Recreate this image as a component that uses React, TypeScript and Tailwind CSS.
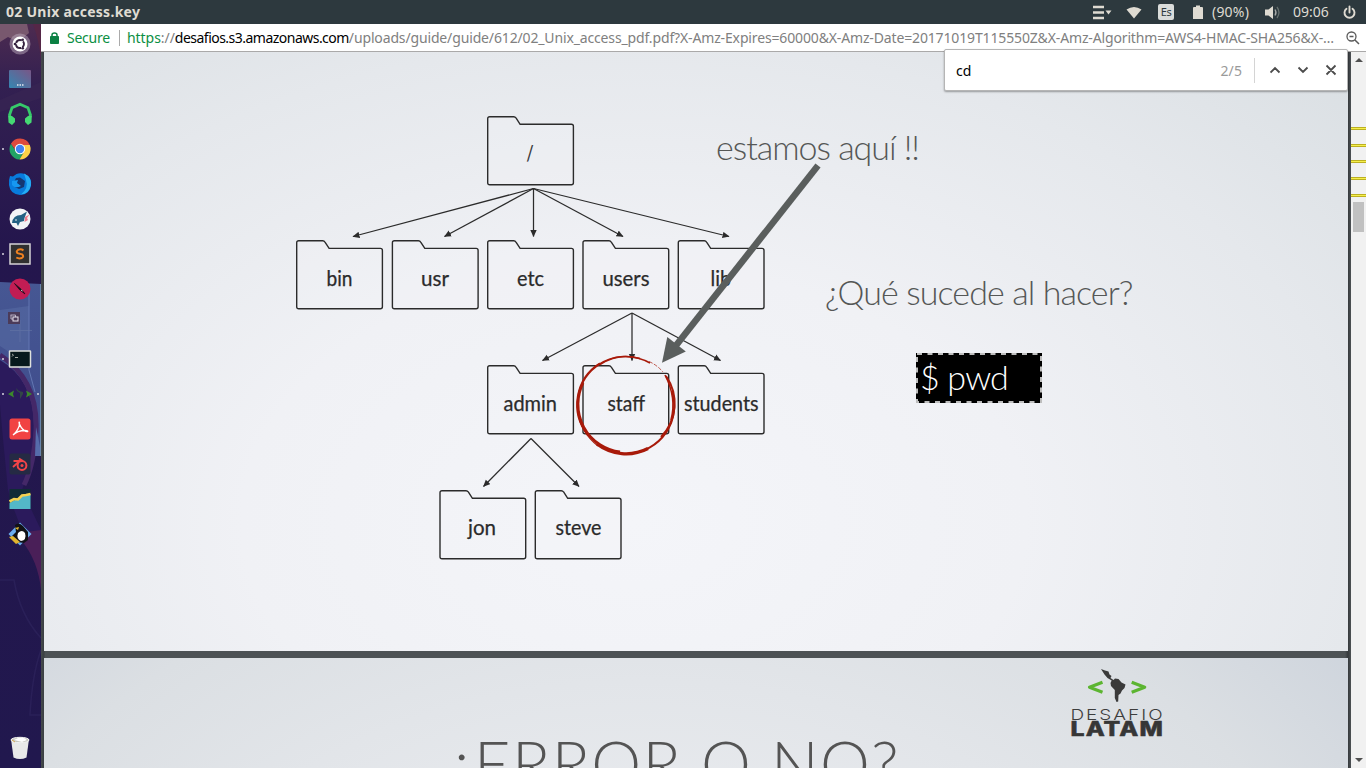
import React from "react";

const ui = "font-['Noto_Sans','Open_Sans',sans-serif]";
const slideFont = "font-['Lato','Open_Sans',sans-serif]";

type Node = { label: string; x: number; y: number; tx: number; w: number; base: number };

const nodes: Node[] = [
  { label: "/", x: 487.7, y: 116.7, tx: 526.5, w: 7, base: 160.5 },
  { label: "bin", x: 296.7, y: 240.8, tx: 326.5, w: 26, base: 285.5 },
  { label: "usr", x: 392.4, y: 240.8, tx: 421, w: 28, base: 285.5 },
  { label: "etc", x: 487.7, y: 240.8, tx: 517, w: 27, base: 285.5 },
  { label: "users", x: 583, y: 240.8, tx: 602.5, w: 47, base: 285.5 },
  { label: "lib", x: 678.3, y: 240.8, tx: 710.5, w: 20.5, base: 285.5 },
  { label: "admin", x: 487.7, y: 365.8, tx: 503.5, w: 53.5, base: 410.5 },
  { label: "staff", x: 583, y: 365.8, tx: 607.5, w: 37.5, base: 410.5 },
  { label: "students", x: 678.3, y: 365.8, tx: 684, w: 74.5, base: 410.5 },
  { label: "jon", x: 440, y: 490.7, tx: 468, w: 28, base: 534.5 },
  { label: "steve", x: 535.3, y: 490.7, tx: 555.5, w: 46, base: 534.5 },
];

const edges: number[][] = [
  [533.5, 188.5, 353, 236.5],
  [533.5, 188.5, 444.5, 236.5],
  [533.5, 188.5, 533.5, 236.5],
  [533.5, 188.5, 623, 236.5],
  [533.5, 188.5, 729, 236.5],
  [632, 313, 542.5, 360.5],
  [632, 313, 632, 360.5],
  [632, 313, 720.5, 360.5],
  [531, 438.5, 483.5, 486.5],
  [531, 438.5, 579, 486.5],
];

function Diagram() {
  return (
    <svg className="absolute inset-0 h-full w-full font-['Lato',sans-serif]" viewBox="44 52 1304 599">
      <defs>
        <marker id="tip" markerUnits="userSpaceOnUse" markerWidth="8" markerHeight="8" refX="6.5" refY="3.5" orient="auto">
          <path d="M0 0.3 L7 3.5 L0 6.7Z" fill="#2b2b2b" />
        </marker>
      </defs>
      {edges.map((e, i) => (
        <line key={i} x1={e[0]} y1={e[1]} x2={e[2]} y2={e[3]} stroke="#2b2b2b" strokeWidth="1.25" markerEnd="url(#tip)" />
      ))}
      {nodes.map((n) => (
        <g key={n.label}>
          <path
            transform={`translate(${n.x} ${n.y})`}
            d="M2 0H26Q27.500 0 28.300 1.300L32.400 7.600H83.700Q85.700 7.600 85.700 9.600V66Q85.700 68 83.700 68H2Q0 68 0 66V2Q0 0 2 0Z"
            fill="#f4f5f9"
            fillOpacity="0.25"
            stroke="#2b2b2b"
            strokeWidth="1.4"
          />
          <text x={n.tx} y={n.base} textLength={n.w} lengthAdjust="spacingAndGlyphs" fontSize="20.500" fontWeight="400" fill="#2b2b2b" stroke="#2b2b2b" strokeWidth="0.25">
            {n.label}
          </text>
        </g>
      ))}
      <path d="M818 165.500 L674 348" stroke="#5a5e5d" strokeWidth="6.6" fill="none" />
      <path d="M662 362.800L667.300 337L685.800 351.500Z" fill="#5a5e5d" />
      <g fill="none" stroke="#a81a0a">
        <path d="M597 365.500A49 49 0 0 1 650 363" strokeWidth="1.500" />
        <path d="M600 364.500A48.500 48.500 0 0 1 640 358.500" strokeWidth="1.500" />
        <path d="M649 361.500Q657 365 663 372" strokeWidth="1" strokeDasharray="4 1.500" opacity="0.7" />
        <path d="M600 363.500A48.500 48.500 0 0 0 588 435" strokeWidth="2.200" />
        <path d="M583 383A48 48 0 0 0 620 452" strokeWidth="2.800" />
        <path d="M597 444A48 48 0 0 0 648 448.500" strokeWidth="3.200" />
        <path d="M630 453.500A48 48 0 0 0 672 391" strokeWidth="2" />
        <path d="M661 437A48 48 0 0 0 666 376" strokeWidth="2" />
        <path d="M671 420Q677 398 665 375" strokeWidth="1.600" />
        <path d="M577.500 410Q580 432 598 446" strokeWidth="1.200" />
      </g>
    </svg>
  );
}

function Logo() {
  return (
    <svg className="absolute left-[1024px] top-[8px] h-[76px] w-[100px] font-['Inter',sans-serif]" viewBox="1068 666 100 76">
      <g fill="none" stroke="#5cb531" strokeWidth="3.200">
        <path d="M1102.500 682.300L1089.500 687.300L1102.500 692.200" strokeLinejoin="round" />
        <path d="M1131.700 682.300L1144.700 687.300L1131.700 692.200" strokeLinejoin="round" />
      </g>
      <path
        d="M1101 669L1105 670.500L1108.500 671.500L1109.500 674.500L1111.500 676L1110.500 678L1113.500 680L1115 678.500L1118.500 679L1121.500 682.500L1125.500 684.500L1124.500 688L1122 690.500L1120.500 693.500L1118.500 695L1118.200 701.500L1116.500 702L1114.800 698V690L1111 686L1110.500 683L1111.700 680.500L1107.500 678L1104.500 674.500Z"
        fill="#3a3a3a"
      />
      <text x="1070.500" y="719.500" fontSize="14.500" fontWeight="300" letterSpacing="1.500" textLength="94" lengthAdjust="spacingAndGlyphs" fill="#3d3d3d">DESAFIO</text>
      <text x="1070.500" y="736" fontSize="19.500" fontWeight="800" letterSpacing="0.900" textLength="93.500" lengthAdjust="spacingAndGlyphs" fill="#363636" stroke="#363636" strokeWidth="0.5" strokeLinejoin="round">LATAM</text>
    </svg>
  );
}

function Wallpaper() {
  return (
    <svg className="absolute inset-0 h-full w-full" viewBox="0 24 41 744" preserveAspectRatio="none">
      <defs>
        <linearGradient id="sky" x1="0" y1="0" x2="0" y2="1">
          <stop offset="0" stopColor="#4d2b50" />
          <stop offset="0.08" stopColor="#332051" />
          <stop offset="0.3" stopColor="#24164d" />
          <stop offset="1" stopColor="#21184e" />
        </linearGradient>
        <linearGradient id="pane" x1="0" y1="0" x2="0" y2="1">
          <stop offset="0" stopColor="#465793" />
          <stop offset="1" stopColor="#3e4a8b" />
        </linearGradient>
      </defs>
      <rect y="24" width="41" height="744" fill="url(#sky)" />
      <path d="M0 24H27L29 33L18 42L8 37L0 42Z" fill="#78586e" />
      <path d="M33 24H41V60Q39 40 33 24" fill="#552747" />
      <path d="M0 100L41 82V98L0 112Z" fill="#382654" opacity=".6" />
      <path d="M0 282L41 284V455H35L0 380Z" fill="url(#pane)" />
      <path d="M0 310L29 306V365L0 346Z" fill="#5568a2" opacity=".65" />
      <path d="M29 284V370L35 392" fill="none" stroke="#6377b2" />
      <path d="M0 360Q35 380 34 429Q34 460 22 490L41 530V560Q20 535 8 490Q2 430 0 405Z" fill="#2b1a5c" />
      <path d="M0 355Q38 380 36 430Q34 465 24 485" fill="none" stroke="#442868" strokeWidth="5" />
      <path d="M36 427Q41 450 41 456H35Z" fill="#566cab" />
      <path d="M26 532L41 530V590Q38 560 21 540" fill="#4a1f58" />
      <path d="M0 580H14Q20 615 41 638M41 650Q32 675 30 715H41" fill="none" stroke="#2a2058" strokeWidth="1.500" />
      <path d="M40.500 284V456" stroke="#6886ad" />
    </svg>
  );
}

const icons: React.ReactNode[] = [
  <>
    <circle cx="16" cy="16" r="10.5" fill="#b9a9bb" opacity=".5" />
    <circle cx="16" cy="16" r="7.500" fill="#fff" />
    <circle cx="16" cy="16" r="4" fill="none" stroke="#35233f" strokeWidth="1.900" strokeDasharray="7 1.370" strokeDashoffset="-4.900" />
    <circle cx="11" cy="16" r="1.300" fill="#35233f" />
    <circle cx="18.700" cy="11.700" r="1.300" fill="#35233f" />
    <circle cx="18.700" cy="20.300" r="1.300" fill="#35233f" />
  </>,
  <>
    <rect x="5" y="7" width="22" height="18" rx="1" fill="url(#desk)" />
    <path d="M13 22h1.500M15.500 22H17M18 22h1.500" stroke="#e5e7ef" strokeWidth="1.500" />
  </>,
  <>
    <path d="M6.500 20L5.500 17L8 9.800L16 6.200L24 9.800L26.500 17L25.500 20" fill="none" stroke="#36ca6a" strokeWidth="2.800" />
    <path d="M4.200 18L8 18L11 20.500V24L8 27L4.500 24.500ZM27.800 18L24 18L21 20.500V24L24 27L27.500 24.500Z" fill="#45d973" />
  </>,
  <>
    <path d="M16 5.500A10.500 10.500 0 0 1 25.800 12H16L12 18L6.910 10.750A10.500 10.500 0 0 1 16 5.500Z" fill="#dd4b3e" />
    <path d="M6.910 10.750A10.500 10.500 0 0 0 15.500 26.500L20 18.500L12 18.500Z" fill="#21a366" />
    <path d="M25.800 12A10.500 10.500 0 0 1 15.500 26.500L20.200 18.500L19.500 12Z" fill="#fed148" />
    <circle cx="16" cy="16" r="5.200" fill="#fff" />
    <circle cx="16" cy="16" r="4.200" fill="#4384f3" />
  </>,
  <>
    <path d="M6 8L9 8.500Q14 3.500 21 6Q28 10 27 17Q26 26.500 16 27Q6 26 5 17Q4.500 12 6 8Z" fill="#087bdc" />
    <path d="M20 5.500Q28 9 27 17Q25 26 17 26.500Q25 20 22 12Z" fill="#26adf5" />
    <path d="M12 10L16 9.500L21 13L20 19L15 21L11 19L15 17L10 14Z" fill="#153772" />
    <path d="M8 13L14 12L13 15L17 18Q11 21 8 17Z" fill="#1698f1" />
  </>,
  <>
    <circle cx="16" cy="16" r="10.500" fill="#f2f4f6" />
    <path d="M8 20Q9 12 17 12L23 8.500L20.500 15L20 18L16 19L14 23L12.500 20Z" fill="#246284" />
    <path d="M21 14L25.500 11.500L23 15L24 17L20.500 19L21 16Z" fill="#ed7b8b" />
    <circle cx="12" cy="17" r=".8" fill="#fff" />
  </>,
  <>
    <rect x="6" y="6" width="20" height="20" fill="#303030" stroke="#d5d2d5" strokeWidth="1.500" />
    <path d="M19.500 12.300Q17 10.800 14.200 11.700Q11.700 13.500 13.500 15.200L18 16.300Q20.400 18.500 17.800 20Q15 21 12.300 19.500" fill="none" stroke="#ef8221" strokeWidth="2" />
  </>,
  <>
    <circle cx="16" cy="16" r="10.500" fill="#c21d54" />
    <path d="M10.500 10.500L17.500 16.500L21 21L15.800 17Z" fill="#160d18" stroke="#160d18" strokeWidth=".7" />
    <path d="M17 17L18.500 18" stroke="#ddd" />
  </>,
  <>
    <path d="M16 12V34M6 22.500H28" stroke="#6475a5" opacity=".6" />
    <rect x="4" y="4" width="12" height="12" fill="#4b3b59" />
    <path d="M6.500 7h5v2M7 7v4h2" fill="none" stroke="#b7afc3" />
    <rect x="9" y="9" width="5" height="4" fill="#4b3b59" stroke="#e9e4ef" />
  </>,
  <>
    <rect x="5.500" y="8" width="21" height="16" rx=".5" fill="#07191d" stroke="#e0e2dd" strokeWidth="1.500" />
    <path d="M8 11L9.500 12L8 13.500M11 14.500H14" fill="none" stroke="#a5aba5" />
  </>,
  <>
    <path d="M4 16L10 12.500L9 16L10 19.500ZM28 16L22 12.500L23 16L22 19.500Z" fill="#3c882b" />
    <path d="M12 10L15 13L19 14L19 16L16 21L16 15L13 13Z" fill="#324646" />
  </>,
  <>
    <rect x="5.500" y="5.500" width="21" height="21" rx="2.500" fill="#f14343" />
    <path d="M9 22C12 20 16 14 15.500 9.500C14.500 7.500 14.800 13 20 17.500C24 20 25.500 17.500 21 17.500C16 17.500 11 20 9 22Z" fill="none" stroke="#fff" strokeWidth="1.300" />
  </>,
  <>
    <rect x="5.500" y="5.500" width="21" height="21" rx="2" fill="#252a44" />
    <circle cx="18" cy="17.500" r="4.400" fill="none" stroke="#f24548" strokeWidth="2" />
    <circle cx="18" cy="17.500" r="1.500" fill="#f24548" />
    <path d="M14.500 14L9 19M17 13H9.500M19 13L15 10.500" stroke="#f24548" strokeWidth="1.800" />
  </>,
  <>
    <path d="M5.500 6H26.500V26H5.500Z" fill="#102c36" />
    <path d="M5.500 20L11 17L15 16L18 13L22 12L26.500 11V26H5.500Z" fill="#53b8c8" />
    <path d="M5.500 18.500L10 16L14 16.500L18 12.500L22 12L26.500 11" fill="none" stroke="#f3d252" strokeWidth="2.600" />
  </>,
  <>
    <path d="M16 4.500L27.500 16L16 27.500L4.500 16Z" fill="#6aaef0" />
    <path d="M11 7Q15 3.500 19 8L24 14V22L20 25L13 24L8 18L12 14Z" fill="#111217" />
    <path d="M14 15Q18 11 21 15Q23 22 17 23Q12 21 14 15Z" fill="#fff" />
    <path d="M5 19L9 18L16 24L12 26ZM11 10L15 9L14 12Z" fill="#e1b52e" />
  </>,
];

const running = [3, 6, 9, 10];

function Launcher() {
  return (
    <nav className="relative flex w-[41px] shrink-0 flex-col overflow-hidden">
      <Wallpaper />
      <svg className="absolute h-0 w-0">
        <defs>
          <linearGradient id="desk" x1="0" y1="1" x2="1" y2="0">
            <stop offset="0" stopColor="#3586b2" />
            <stop offset="1" stopColor="#795687" />
          </linearGradient>
        </defs>
      </svg>
      <div className="relative flex flex-1 flex-col pt-[2px]">
        {icons.map((icon, i) => (
          <div key={i} className="relative flex h-[35px] items-center pl-1">
            {running.includes(i) && <span className="absolute left-[1.500px] top-[17px] size-[2px] rounded-full bg-[#d7d3df]" />}
            {i === 10 && <span className="absolute right-[2.500px] top-[17px] size-[2px] rounded-full bg-[#d7d3df]" />}
            <svg className="size-8 overflow-visible" viewBox="0 0 32 32">{icon}</svg>
          </div>
        ))}
        <div className="mt-auto flex h-[38px] items-center pl-1">
          <svg className="size-8" viewBox="0 0 32 32">
            <path d="M7 6L9.500 24.500Q16 27.500 22.500 24.500L25 6Z" fill="#e9e9e9" />
            <ellipse cx="16" cy="7" rx="9" ry="2.700" fill="#c7c7c0" stroke="#f3f3f3" />
            <path d="M10 7L14 5L20 5L23 7L18 9Z" fill="#fff" />
            <path d="M8 7L11 9" stroke="#d8a951" />
          </svg>
        </div>
      </div>
    </nav>
  );
}

function TopBar() {
  return (
    <header className={`flex h-6 shrink-0 items-center bg-[#2d393e] pb-px pr-[10px] text-[#dfdbd2] ${ui}`}>
      <span className="pl-[6px] text-[14px] font-bold tracking-[0.280px] whitespace-nowrap">02 Unix access.key</span>
      <div className="ml-auto flex h-6 items-center text-[14px]">
        <svg className="h-4 w-[19px]" viewBox="0 0 19 16">
          <path d="M0 3H11M0 8.500H11M0 14H11" stroke="#dfdbd2" strokeWidth="2.500" />
          <path d="M12.500 6.500H18.500L15.500 10.500Z" fill="#dfdbd2" />
        </svg>
        <svg className="ml-[14px] h-4 w-4" viewBox="0 0 16 16"><path d="M8 14.500L0.500 5.500Q8 0.500 15.500 5.500Z" fill="#dfdbd2" /></svg>
        <span className="ml-[16px] flex h-4 w-4 items-center justify-center rounded-[2px] bg-[#dadcda] text-[11px] leading-none tracking-[-0.400px] text-[#2d393e]">Es</span>
        <svg className="ml-[19px] h-4 w-[10px]" viewBox="0 0 10 16"><path d="M1 3H3V1.500H7V3H9Q10 3 10 4V15H0V4Q0 3 1 3Z" fill="#dfdbd2" /></svg>
        <span className="ml-[9px] w-[38px] text-[14px] tracking-[0.200px] whitespace-nowrap">(90%)</span>
        <svg className="ml-[15px] h-4 w-4" viewBox="0 0 16 16">
          <path d="M0 5.500H3.500L8 2V15L3.500 11.500H0Z" fill="#dfdbd2" />
          <path d="M10 5.500Q12 8.500 10 11.500" fill="none" stroke="#a7aaa8" strokeWidth="1.300" />
          <path d="M12 3Q16 8.500 12 14" fill="none" stroke="#66706f" strokeWidth="1.300" />
        </svg>
        <span className="ml-[12px] w-[37px] text-[14px] tracking-[0px] whitespace-nowrap">09:06</span>
        <svg className="ml-[13px] h-[14px] w-[13px]" viewBox="0 0 13 14">
          <path d="M3.500 3.700A5 5 0 1 0 9.500 3.700M6.500 1.500V7.500" fill="none" stroke="#dfdbd2" strokeWidth="1.900" strokeLinecap="round" />
        </svg>
      </div>
    </header>
  );
}

function AddressBar() {
  return (
    <div className={`flex h-[28px] shrink-0 items-center border-b border-[#aaa9a9] bg-white pl-[9px] pr-[6px] text-[14px] ${ui}`}>
      <svg className="h-3 w-[9px]" viewBox="0 0 9 12">
        <path d="M0.500 4.500H8.500V11.500H0.500Z" fill="#0b8043" stroke="#0b8043" />
        <path d="M2 5V3Q2 1 4.500 1Q7 1 7 3V5" fill="none" stroke="#0b8043" strokeWidth="1.500" />
      </svg>
      <span className="ml-[8px] w-[43px] tracking-[-0.250px] whitespace-nowrap text-[#0b8f43]">Secure</span>
      <span className="ml-[9px] h-4 w-px bg-[#aaa]" />
      <span className="ml-[7px] w-[1210px] whitespace-nowrap tracking-[-0.145px] text-[#808080]">
        <span className="tracking-[-0.050px]"><span className="text-[#0b8f43]">https</span>://</span><span className="tracking-[-0.520px] text-black">desafios.s3.amazonaws.com</span>/uploads/guide/guide/612/02_Unix_access_pdf.pdf?X-Amz-Expires=60000&amp;X-Amz-Date=20171019T115550Z&amp;X-Amz-Algorithm=AWS4-HMAC-SHA256&amp;X-…
      </span>
      <svg className="ml-auto h-[14px] w-[14px]" viewBox="0 0 14 14">
        <circle cx="5.500" cy="5.500" r="4.500" fill="none" stroke="#5a5a5a" strokeWidth="1.300" />
        <path d="M3.500 5.500H7.500M8.700 8.700L13 13" stroke="#5a5a5a" strokeWidth="1.500" />
      </svg>
    </div>
  );
}

function FindBar() {
  return (
    <div className={`absolute left-[903px] top-[25px] z-10 flex h-[42px] w-[404px] items-center rounded-[2px] border border-[#b5b5b5] bg-white pl-[11px] pr-[9px] text-[14px] shadow-[0_1px_2px_rgba(0,0,0,0.35)] ${ui}`}>
      <span className="text-black">cd</span>
      <span className="ml-auto tracking-[0.100px] text-[#9a9a9a]">2/5</span>
      <span className="ml-[12px] h-[25px] w-px bg-[#d4d4d4]" />
      <svg className="ml-[15px] h-3 w-[68px]" viewBox="0 0 68 12" fill="none" stroke="#4c4c4c" strokeWidth="1.800">
        <path d="M0.500 8.500L5 4L9.500 8.500M28.500 3.500L33 8L37.500 3.500M56.500 1.500L65.500 10.500M65.500 1.500L56.500 10.500" />
      </svg>
    </div>
  );
}

const marks = ["top-[75px]", "top-[92px]", "top-[108px]", "top-[125px]", "top-[142px]"];

function Scrollbar() {
  return (
    <div className="relative flex w-[15px] shrink-0 flex-col items-center justify-between bg-[#f1f1f1] py-[6px]">
      <svg className="h-[4px] w-[8px]" viewBox="0 0 8 4"><path d="M0 4L4 0L8 4Z" fill="#505050" /></svg>
      <svg className="h-[4px] w-[8px]" viewBox="0 0 8 4"><path d="M0 0L4 4L8 0Z" fill="#505050" /></svg>
      {marks.map((m) => (
        <span key={m} className={`absolute left-0 h-[3px] w-[15px] border-y border-[#bdb021] bg-[#f6f04b] ${m}`} />
      ))}
      <span className="absolute left-[2px] top-[150px] h-[30px] w-[11px] bg-[#c1c1c1]" />
    </div>
  );
}

export default function App() {
  return (
    <div className="flex h-screen w-screen flex-col overflow-hidden bg-[#2d393e]">
      <TopBar />
      <div className="flex min-h-0 flex-1">
        <Launcher />
        <main className="relative flex min-w-0 flex-1 flex-col">
          <AddressBar />
          <FindBar />
          <div className="flex min-h-0 flex-1">
            <div className={`flex min-w-0 flex-1 flex-col gap-[7px] overflow-hidden bg-[linear-gradient(90deg,#454a4d_0px,#3a3f42_3px,#4d5255_4px,#4d5255_1304px,#35393c_1307px,#4d5255_1310px)] px-[3px] ${slideFont}`}>
              <section className="relative h-[599px] shrink-0 bg-[radial-gradient(ellipse_980px_640px_at_590px_470px,#f4f5f9_0%,#f0f1f5_40%,#e5e8ec_75%,#dbe0e4_100%)]">
                <Diagram />
                <p className="absolute left-[672px] top-[74px] whitespace-nowrap text-[34px] leading-[42px] font-light tracking-[-1.020px] text-[#555756]">estamos aquí !!</p>
                <p className="absolute left-[781px] top-[219px] whitespace-nowrap text-[34px] leading-[42px] font-light tracking-[-0.900px] text-[#555756]">¿Qué sucede al hacer?</p>
                <div className="absolute left-[872px] top-[301px] flex h-[50px] w-[126px] items-center bg-black pl-[4px]">
                  <svg className="absolute inset-0 h-full w-full" viewBox="0 0 126 50">
                    <rect x="1" y="1" width="124" height="48" fill="none" stroke="#bdbdbd" strokeWidth="2" strokeDasharray="5 5.500" />
                  </svg>
                  <span className="relative -top-px whitespace-nowrap text-[34px] leading-[50px] font-light tracking-[-0.800px] text-white">$ pwd</span>
                </div>
              </section>
              <section className="relative h-[700px] shrink-0 bg-[radial-gradient(ellipse_900px_650px_at_600px_400px,#f2f3f6_0%,#e2e5e9_58%,#dbdfe3_80%,#c9d0da_110%)]">
                <Logo />
                <h1 className="absolute left-[403px] top-[67px] whitespace-nowrap text-[63px] leading-[76px] font-light tracking-[1.500px] text-[#545454]">¿ERROR O NO?</h1>
              </section>
            </div>
            <Scrollbar />
          </div>
        </main>
      </div>
    </div>
  );
}
